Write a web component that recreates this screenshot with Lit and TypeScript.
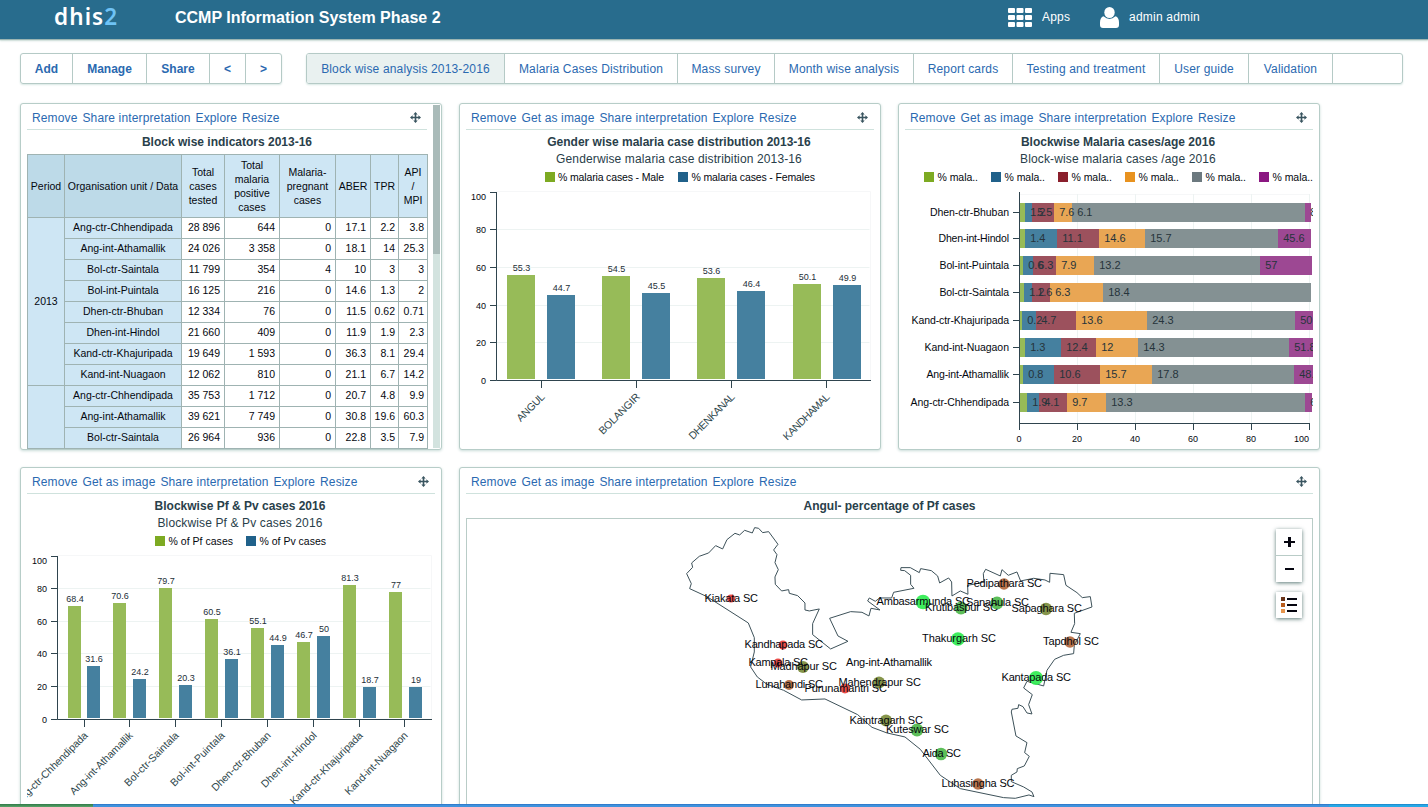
import { LitElement, html, css, svg, nothing } from "lit";
import { customElement, property } from "lit/decorators.js";

const label = (x1: number, x2: number, y: number, text: string, cls = "small") =>
  svg`<text class=${cls} x=${x1} y=${y} textLength=${x2 - x1}>${text}</text>`;

const chartStyles = css`
  :host { display: block; }
  svg { display: block; overflow: hidden; }
  text { font-family: "Liberation Sans", Arial, sans-serif; fill: #05080f; }
  .small { font-size: 10.5px; }
  .axis-text { font-size: 9px; }
  .value { font-size: 9px; text-anchor: middle; fill: #1d2f38; }
  .seg { font-size: 11px; fill: #26343b; }
  .end { text-anchor: end; }
  .mid { text-anchor: middle; }
  .tilt { font-size: 10.5px; fill: #2f474c; text-anchor: end; }
  .axis { stroke: #2f444e; stroke-width: 1; fill: none; }
  .grid { stroke: #edf3f2; stroke-width: 1; fill: none; }
  .frame { stroke: #f6f7f8; stroke-width: 1; fill: none; }
  .crisp { shape-rendering: crispEdges; }
`;

interface Group { name: string; tick: number; len: number; x: number[]; top: number[]; v: string[] }

interface ColumnSpec {
  box: [number, number, number, number];
  legend: [number, number, number, string][];
  axisX: number; right: number; ticks: number[]; barW: number; labelY: number;
  groups: Group[];
}

const COLORS = ["#7daa22", "#20618a", "#8a1f2c", "#e8921f", "#6c797f", "#8b1781"];
const SOFT = ["#97bb58", "#45809f", "#9c515d", "#e9a654", "#849193", "#9d4893"];

const gender: ColumnSpec = {
  box: [466, 168, 408, 280],
  legend: [[545, 558, 664, "% malaria cases - Male"], [678, 691.5, 815, "% malaria cases - Females"]],
  axisX: 496.5, right: 870.5, ticks: [192.5, 229.5, 267.5, 305.5, 342.5, 380.5], barW: 28, labelY: 395.5,
  groups: [
    { name: "ANGUL", tick: 541.5, len: 35, x: [507, 547], top: [275, 295], v: ["55.3", "44.7"] },
    { name: "BOLANGIR", tick: 636.5, len: 53, x: [602, 642], top: [276, 293], v: ["54.5", "45.5"] },
    { name: "DHENKANAL", tick: 731.5, len: 60, x: [697, 737], top: [278, 291], v: ["53.6", "46.4"] },
    { name: "KANDHAMAL", tick: 826.5, len: 61, x: [793, 833], top: [284, 285], v: ["50.1", "49.9"] },
  ],
};

const blocks: [string, number, number, number, number, string, string][] = [
  ["Ang-ctr-Chhendipada", 84.5, 98, 606, 666, "68.4", "31.6"],
  ["Ang-int-Athamallik", 129.5, 84, 603, 679, "70.6", "24.2"],
  ["Bol-ctr-Saintala", 175.5, 72, 588, 685, "79.7", "20.3"],
  ["Bol-int-Puintala", 221.5, 72, 619, 659, "60.5", "36.1"],
  ["Dhen-ctr-Bhuban", 267.5, 79, 628, 645, "55.1", "44.9"],
  ["Dhen-int-Hindol", 313.5, 74, 642, 636, "46.7", "50"],
  ["Kand-ctr-Khajuripada", 359.5, 98, 585, 687, "81.3", "18.7"],
  ["Kand-int-Nuagaon", 404.5, 84, 592, 687, "77", "19"],
];
const greenX = [68, 113, 159, 205, 251, 297, 343, 389];
const blueX = [87, 133, 179, 225, 271, 317, 363, 409];

const pfpv: ColumnSpec = {
  box: [27, 532, 408, 280],
  legend: [[155, 168.5, 233, "% of Pf cases"], [246, 259.5, 326, "% of Pv cases"]],
  axisX: 57.5, right: 431.5, ticks: [556.5, 588.5, 621.5, 653.5, 686.5, 719.5], barW: 13, labelY: 734,
  groups: blocks.map(([name, tick, len, a, b, va, vb], i) =>
    ({ name, tick, len, x: [greenX[i], blueX[i]], top: [a, b], v: [va, vb] })),
};

@customElement("column-chart")
class ColumnChart extends LitElement {
  @property({ attribute: false }) spec!: ColumnSpec;
  static styles = chartStyles;
  render() {
    const s = this.spec;
    const [bx, by, bw, bh] = s.box;
    const top = s.ticks[0];
    const base = s.ticks[5];
    return html`<svg width=${bw} height=${bh} viewBox="${bx} ${by} ${bw} ${bh}">
      ${s.legend.map(([sx, a, b, t], i) => svg`
        <rect x=${sx} y=${by + 4} width="10" height="10" fill=${COLORS[i]}></rect>${label(a, b, by + 13, t)}`)}
      <path class="frame" d="M${s.axisX} ${top - 1}H${s.right}V${base}"></path>
      ${s.ticks.slice(1, 5).map((y) => svg`<path class="grid" d="M${s.axisX} ${y}H${s.right - 1}"></path>`)}
      ${s.ticks.map((y, i) => {
        const t = String(100 - i * 20);
        return svg`<path class="axis" d="M${s.axisX - 6.5} ${y}H${s.axisX}"></path>
          <text class="axis-text end" x=${s.axisX - 10.5} y=${i === 0 ? y + 7.5 : y + 3}>${t}</text>`;
      })}
      <path class="axis" d="M${s.axisX} ${top - 0.5}V${base}H${s.right + 0.5}"></path>
      ${s.groups.map((g) => svg`
        ${g.x.map((x, i) => svg`
          <rect class="crisp" x=${x} y=${g.top[i]} width=${s.barW} height=${base - 1.5 - g.top[i]} fill=${SOFT[i]}></rect>
          <text class="value" x=${x + s.barW / 2 + 0.5} y=${g.top[i] - 4.5}>${g.v[i]}</text>`)}
        <path class="axis" d="M${g.tick} ${base}V${base + 7.5}"></path>
        <text class="tilt" textLength=${g.len} transform="translate(${g.tick + 4} ${s.labelY + 2}) rotate(-45)">${g.name}</text>`)}
    </svg>`;
  }
}

const stackRows: [string, number, number, number[], string[]][] = [
  ["Dhen-ctr-Bhuban", 930, 203, [1025, 1032, 1054, 1072, 1305, 1311], ["1.2", "5.5", "7.6", "6.1", "8"]],
  ["Dhen-int-Hindol", 938.5, 229, [1025, 1057, 1099, 1145, 1278, 1311], ["1.4", "11.1", "14.6", "15.7", "45.6"]],
  ["Bol-int-Puintala", 939.5, 256, [1023, 1033, 1056, 1094, 1260, 1312], ["0.6", "6.3", "7.9", "13.2", "57"]],
  ["Bol-ctr-Saintala", 939.5, 283, [1024, 1032, 1050, 1103, 1311], ["1.2", "1.6", "6.3", "18.4"]],
  ["Kand-ctr-Khajuripada", 911.5, 311, [1022, 1036, 1076, 1147, 1295, 1313], ["0.2", "4.7", "13.6", "24.3", "50"]],
  ["Kand-int-Nuagaon", 924.5, 338, [1025, 1061, 1096, 1138, 1289, 1313], ["1.3", "12.4", "12", "14.3", "51.8"]],
  ["Ang-int-Athamallik", 926.5, 365, [1023, 1054, 1100, 1152, 1294, 1313], ["0.8", "10.6", "15.7", "17.8", "48.1"]],
  ["Ang-ctr-Chhendipada", 910.5, 393, [1027, 1039, 1067, 1106, 1305, 1312], ["1.9", "4.1", "9.7", "13.3", "6"]],
];

@customElement("stack-chart")
class StackChart extends LitElement {
  static styles = chartStyles;
  render() {
    const cols = [0, 1, 2, 3, 4, 5].map((i) => 1019.5 + i * 58);
    return html`<svg width="408" height="280" viewBox="905 168 408 280">
      ${COLORS.map((c, i) => svg`<rect x=${924 + i * 67} y="172" width="10" height="10" fill=${c}></rect>
        ${label(937.5 + i * 67, 978 + i * 67, 181, "% mala..")}`)}
      <path class="frame" d="M1020 194.5H1309"></path>
      ${cols.slice(1).map((x) => svg`<path class="grid" d="M${x} 194V423"></path>`)}
      ${stackRows.map(([name, x, y, ends, vals]) => svg`
        ${label(x, 1009, y + 12.5, name)}
        <path class="axis" d="M1013 ${y + 9.5}H1019"></path>
        ${ends.map((e, i) => {
          const from = i === 0 ? 1020 : ends[i - 1];
          return svg`<rect class="crisp" x=${from} y=${y} width=${e - from} height="19" fill=${SOFT[i]}></rect>`;
        })}
        ${vals.map((v, i) => svg`<text class="seg" x=${ends[i] + 5.2} y=${y + 13}>${v}</text>`)}`)}
      <path class="axis" d="M1019.5 192V423.5H1310"></path>
      ${cols.map((x, i) => svg`<path class="axis" d="M${x} 423V430"></path>
        <text class="axis-text mid" x=${i === 5 ? 1301.5 : x - 0.5} y="442">${i * 20}</text>`)}
    </svg>`;
  }
}

const RED = "#e83f3c", OLIVE = "#7d8d3d", BROWN = "#b3693e", GREEN = "#50b94c", LIME = "#30ec52";
const stations: [string, number, number, number, number, number, number, string][] = [
  ["Kiakata SC", 704.5, 758, 602, 731, 598.5, 4, RED],
  ["Kandhapada SC", 744.5, 823, 648, 783, 645, 4.5, RED],
  ["Kampala SC", 748.5, 808, 666, 778, 663, 4.5, RED],
  ["Madhapur SC", 770.5, 837, 670, 803, 667, 6, OLIVE],
  ["Lunahandi SC", 755.5, 823, 688, 789, 685, 5, BROWN],
  ["Purunamantri SC", 804.5, 887, 692, 845, 688.5, 5, RED],
  ["Mahendrapur SC", 838.5, 921, 686, 879, 682.5, 6, OLIVE],
  ["Ang-int-Athamallik", 846, 932, 666, 0, 0, 0, ""],
  ["Kaintragarh SC", 849.5, 923, 724, 886, 720.5, 6, OLIVE],
  ["Kuteswar SC", 886, 949, 733, 917, 730, 6.5, GREEN],
  ["Ambasarmunda SC", 876.5, 970, 605, 923, 602, 7.3, LIME],
  ["Krutibaspur SC", 925, 998, 611, 961, 608, 6.5, GREEN],
  ["Sanahula SC", 966, 1029, 606, 997, 603, 6.5, GREEN],
  ["Pedipathara SC", 966.5, 1042, 587, 1004, 584, 5.7, BROWN],
  ["Sapaghara SC", 1011.5, 1082, 612, 1046, 609, 6.2, OLIVE],
  ["Thakurgarh SC", 922, 996, 642, 958, 639, 6.8, LIME],
  ["Tapdhol SC", 1043, 1099, 645, 1070, 642, 5.8, BROWN],
  ["Kantapada SC", 1001.5, 1071, 681, 1036, 678, 7, LIME],
  ["Aida SC", 922.5, 961, 757, 941, 754, 6.3, GREEN],
  ["Luhasingha SC", 941.5, 1014.5, 787, 978, 784, 5.8, BROWN],
];

@customElement("station-map")
class StationMap extends LitElement {
  static styles = [chartStyles, css`
    :host { position: relative; height: 300px; border: 1px solid #b9ccc7; box-sizing: border-box; }
    .border { fill: none; stroke: #3c5058; stroke-width: 3; }
    .name { font-size: 11px; fill: #05070c; }
    .tools { position: absolute; top: 10px; right: 10px; display: flex; flex-direction: column; gap: 10px; }
    .box { width: 26px; background: #fff; box-shadow: 0 1px 4px #5b7a77; display: flex; flex-direction: column; }
    .btn { height: 26px; }
    .btn + .btn { border-top: 1px solid #b9ccc7; }
  `];
  render() {
    return html`<svg width="845" height="298" viewBox="467 519 845 298">
      <g transform="translate(670.3 515.3) scale(.33333)"><path class="border" d="M731 219L670 231 664 248 628 248 615 258 597 248 592 257 629 284 602 279 596 302 575 291 541 289 478 309 503 362 533 378 481 401 427 358 427 325 447 281 417 287 404 284 404 263 382 241 357 234 355 223 334 227 315 207 314 185 324 163 314 142 320 118 310 104 323 87 295 49 277 52 265 39 253 37 246 53 223 45 208 59 194 54 170 73 157 101 136 91 115 113 87 123 64 143 67 156 49 175 63 205 58 220 110 244 234 323 252 367 252 410 241 455 261 485 290 507 340 525 394 554 464 551 562 598 605 636 650 653 704 665"></path></g>
      <g transform="translate(880.3 545.3) scale(.33333)"><path class="border" d="M74 575L120 612 180 690 240 730 370 757 405 759 446 749 461 754 455 740 430 725 393 709 393 690 410 680 411 670 432 662 447 633 433 622 440 592 407 572 393 500 395 492 413 489 415 478 428 484 440 503 455 506 445 478 456 448 430 428 440 408 490 422 500 375 523 342 550 330 580 325 582 300 600 265 572 261 583 235 582 204 635 185 630 154 606 157 590 142 557 120 550 88 509 84 508 111 494 104 460 99 421 107 410 80 384 90 365 73 360 92 316 72 309 85 311 110 290 115 262 120 263 147 240 137 215 152 214 110 205 98 178 113 172 92 153 76 121 70 117 82 90 67 62 67 61 75 73 76 91 90 91 117 101 129"></path></g>
      ${stations.map((s) => s[6] ? svg`<circle cx=${s[4]} cy=${s[5]} r=${s[6]} fill=${s[7]} opacity=".93"></circle>` : nothing)}
      ${stations.map((s) => label(s[1], s[2], s[3], s[0], "name"))}
    </svg>
    <div class="tools">
      <div class="box">
        <div class="btn"><svg width="26" height="26"><path fill="#05050f" d="M8 12h11v2H8zM12 8h3v10h-3z"></path></svg></div>
        <div class="btn"><svg width="26" height="26"><path fill="#05050f" d="M9 12h9v2H9z"></path></svg></div>
      </div>
      <div class="box"><svg width="26" height="26">
        <path fill="#6b351a" d="M5 5h4v4H5z"></path><path fill="#b95d1c" d="M5 11h4v4H5z"></path><path fill="#e6954d" d="M5 17h4v4H5z"></path>
        <path fill="#05050f" d="M11 6h10v2H11zM11 12h10v2H11zM11 18h10v2H11z"></path></svg></div>
    </div>`;
  }
}

const COLS = [37, 117, 43, 55, 56, 35, 28, 29];
const HEAD = ["Period", "Organisation unit / Data", "Total cases tested", "Total malaria positive cases", "Malaria-pregnant cases", "ABER", "TPR", "API / MPI"];
const ROWS = [
  ["Ang-ctr-Chhendipada", "28 896", "644", "0", "17.1", "2.2", "3.8"],
  ["Ang-int-Athamallik", "24 026", "3 358", "0", "18.1", "14", "25.3"],
  ["Bol-ctr-Saintala", "11 799", "354", "4", "10", "3", "3"],
  ["Bol-int-Puintala", "16 125", "216", "0", "14.6", "1.3", "2"],
  ["Dhen-ctr-Bhuban", "12 334", "76", "0", "11.5", "0.62", "0.71"],
  ["Dhen-int-Hindol", "21 660", "409", "0", "11.9", "1.9", "2.3"],
  ["Kand-ctr-Khajuripada", "19 649", "1 593", "0", "36.3", "8.1", "29.4"],
  ["Kand-int-Nuagaon", "12 062", "810", "0", "21.1", "6.7", "14.2"],
  ["Ang-ctr-Chhendipada", "35 753", "1 712", "0", "20.7", "4.8", "9.9"],
  ["Ang-int-Athamallik", "39 621", "7 749", "0", "30.8", "19.6", "60.3"],
  ["Bol-ctr-Saintala", "26 964", "936", "0", "22.8", "3.5", "7.9"],
];

@customElement("pivot-table")
class PivotTable extends LitElement {
  static styles = css`
    :host { display: block; }
    table { border-collapse: collapse; table-layout: fixed; width: 400px; font: 10.5px "Liberation Sans", Arial, sans-serif; color: #05080f; }
    td, th { border: 1px solid #9fb3b2; padding: 0; height: 18px; line-height: 14px; font-weight: normal; text-align: center; }
    td { padding-bottom: 2px; }
    th { background: #cee6f4; height: 61px; line-height: 14px; padding: 0 5px 1px; }
    th.dim { background: #bddae8; padding: 0 0 1px; white-space: nowrap; }
    th.tight { padding: 0 2px 1px; }
    th.tight:last-child { padding: 0 4px 1px; }
    td.h { background: #cee6f4; }
    td.n { text-align: right; padding-right: 4px; white-space: nowrap; }
    td.n:nth-last-child(-n + 2) { padding-right: 3px; }
  `;
  render() {
    return html`<table>
      <colgroup>${COLS.map((w) => html`<col style="width:${w}px">`)}</colgroup>
      <tr>${HEAD.map((h, i) => html`<th class=${i < 2 ? "dim" : i > 3 ? "tight" : ""}>${h}</th>`)}</tr>
      ${ROWS.map((r, i) => html`<tr>
        ${i === 0 ? html`<td class="h" rowspan="8">2013</td>` : i === 8 ? html`<td class="h" rowspan="3"></td>` : nothing}
        ${r.map((c, j) => html`<td class=${j === 0 ? "h" : "n"}>${c}</td>`)}
      </tr>`)}
    </table>`;
  }
}

@customElement("dash-card")
class DashCard extends LitElement {
  @property() heading = "";
  @property() sub = "";
  @property({ type: Boolean }) table = false;
  static styles = css`
    :host { display: flex; box-sizing: border-box; height: 347px; border: 1px solid #b7cdc8; border-radius: 3px; background: #fff; box-shadow: 0 1px 3px #c9dcd8; overflow: hidden; }
    .body { flex: 1; min-width: 0; padding: 0 6px; font: 12px "Liberation Sans", Arial, sans-serif; }
    .bar { display: flex; align-items: center; gap: 4.9px; height: 26px; padding: 2px 6px 0 5px; box-sizing: border-box; border-bottom: 1px solid #cfe2dd; color: #2a69b0; letter-spacing: .14px; white-space: nowrap; }
    .move { margin-left: auto; width: 11px; height: 11px; }
    h3, p { margin: 0; text-align: center; color: #29404a; font-size: 12px; }
    h3 { line-height: 17px; padding-top: 4px; letter-spacing: 0; }
    p { line-height: 17px; letter-spacing: .13px; }
    .charted { padding-left: 18px; }
    .track { width: 7px; background: #d3e3df; margin: 1px 1px 1px 0; }
    .thumb { height: 149px; background: #aabbb9; }
    .gap { height: 3px; }
  `;
  render() {
    const links = ["Remove", ...(this.table ? [] : ["Get as image"]), "Share interpretation", "Explore", "Resize"];
    return html`<div class="body">
        <div class="bar">${links.map((l) => html`<span>${l}</span>`)}
          <svg class="move" viewBox="0 0 11 11"><path fill="#3a5560" d="M5.5 0l2.2 2.6H6.3v2.1h2.1V3.3L11 5.5 8.4 7.7V6.3H6.3v2.1h1.4L5.5 11 3.3 8.4h1.4V6.3H2.6v1.4L0 5.5l2.6-2.2v1.4h2.1V2.6H3.3z"></path></svg>
        </div>
        <h3 class=${this.sub ? "charted" : ""}>${this.heading}</h3>
        ${this.sub ? html`<p class="charted">${this.sub}</p>` : html`<div class="gap"></div>`}
        <slot></slot>
      </div>
      ${this.table ? html`<div class="track"><div class="thumb"></div></div>` : nothing}`;
  }
}

const ACTIONS = [["Add", 52], ["Manage", 74], ["Share", 63], ["<", 36], [">", 35]] as [string, number][];
const TABS = [["Block wise analysis 2013-2016", 198], ["Malaria Cases Distribution", 173], ["Mass survey", 97], ["Month wise analysis", 139], ["Report cards", 99], ["Testing and treatment", 147], ["User guide", 89], ["Validation", 84]] as [string, number][];

@customElement("app-root")
class AppRoot extends LitElement {
  static styles = css`
    :host { display: flex; flex-direction: column; height: 807px; overflow: hidden; background: #fff; font-family: "Liberation Sans", Arial, sans-serif; }
    header { flex: none; height: 39px; background: #286c8d; box-shadow: 0 1px 1px #9bb5b2, 0 2px 2px #d5e3df; display: flex; align-items: center; color: #fff; padding: 0 228px 5px 54px; box-sizing: border-box; }
    .logo { font: 600 22.5px/34px "Noto Sans", "Open Sans", sans-serif; width: 121px; letter-spacing: 1.1px; }
    .logo span { color: #6fc3f5; }
    h1 { font-size: 16px; margin: 0; flex: 1; padding-top: 2px; }
    .apps { display: flex; align-items: center; font-size: 12px; letter-spacing: .2px; }
    .apps svg { flex: none; margin-right: 10px; }
    .apps .user { margin-left: 30px; }
    .bars { flex: none; display: flex; gap: 24px; padding: 14px 25px 0 20px; }
    .group { display: flex; box-sizing: border-box; height: 31px; border: 1px solid #b5cac6; border-radius: 3px; box-shadow: 0 1px 2px #d8e8e4; overflow: hidden; color: #2a69b0; font-size: 12px; letter-spacing: .16px; line-height: 30px; }
    .group span { text-align: center; box-sizing: border-box; border-right: 1px solid #b5cac6; white-space: nowrap; }
    .actions { font-weight: bold; letter-spacing: 0; }
    .actions span:last-child { border-right: 0; }
    .tabs { flex: 1; }
    .tabs .on { background: #e9f1f0; }
    .grid { flex: 1; min-height: 0; overflow: hidden; display: grid; grid-template-columns: repeat(3, 422px); grid-auto-rows: 347px; gap: 17px; padding: 19px 20px 0; }
    .wide { grid-column: span 2; }
    .task { flex: none; height: 3px; display: flex; }
    .start { width: 93px; background: linear-gradient(#2f7a48, #5aa469); }
    .mid { flex: 1; background: linear-gradient(#2a72c4, #3f92dd 50%); }
    .tray { width: 99px; background: linear-gradient(#1b80c4, #25a8e6 50%); }
  `;
  render() {
    return html`
      <header>
        <div class="logo">dhis<span>2</span></div>
        <h1>CCMP Information System Phase 2</h1>
        <div class="apps">
          <svg width="24" height="19" fill="#fff">${[0, 7, 14].map((y) => [0, 8.5, 17].map((x) => svg`<rect x=${x} y=${y} width="7" height="5" rx="1"></rect>`))}</svg>Apps
          <svg class="user" width="19" height="21" fill="#fff"><ellipse cx="9.5" cy="5.5" rx="5.2" ry="5.5"></ellipse><path d="M3.5 9.3Q9.5 14.5 15.5 9.3Q19 10.5 19 15.5V18Q19 21 16 21H3Q0 21 0 18V15.5Q0 10.5 3.5 9.3Z"></path></svg>admin admin
        </div>
      </header>
      <div class="bars">
        <div class="group actions">${ACTIONS.map(([t, w]) => html`<span style="width:${w}px">${t}</span>`)}</div>
        <div class="group tabs">${TABS.map(([t, w], i) => html`<span class=${i ? "" : "on"} style="width:${w}px">${t}</span>`)}</div>
      </div>
      <div class="grid">
        <dash-card table heading="Block wise indicators 2013-16"><pivot-table></pivot-table></dash-card>
        <dash-card heading="Gender wise malaria case distribution 2013-16" sub="Genderwise malaria case distribition 2013-16"><column-chart .spec=${gender}></column-chart></dash-card>
        <dash-card heading="Blockwise Malaria cases/age 2016" sub="Block-wise malaria cases /age 2016"><stack-chart></stack-chart></dash-card>
        <dash-card heading="Blockwise Pf &amp; Pv cases 2016" sub="Blockwise Pf &amp; Pv cases 2016"><column-chart .spec=${pfpv}></column-chart></dash-card>
        <dash-card class="wide" heading="Angul- percentage of Pf cases"><station-map></station-map></dash-card>
      </div>
      <div class="task"><div class="start"></div><div class="mid"></div><div class="tray"></div></div>`;
  }
}
